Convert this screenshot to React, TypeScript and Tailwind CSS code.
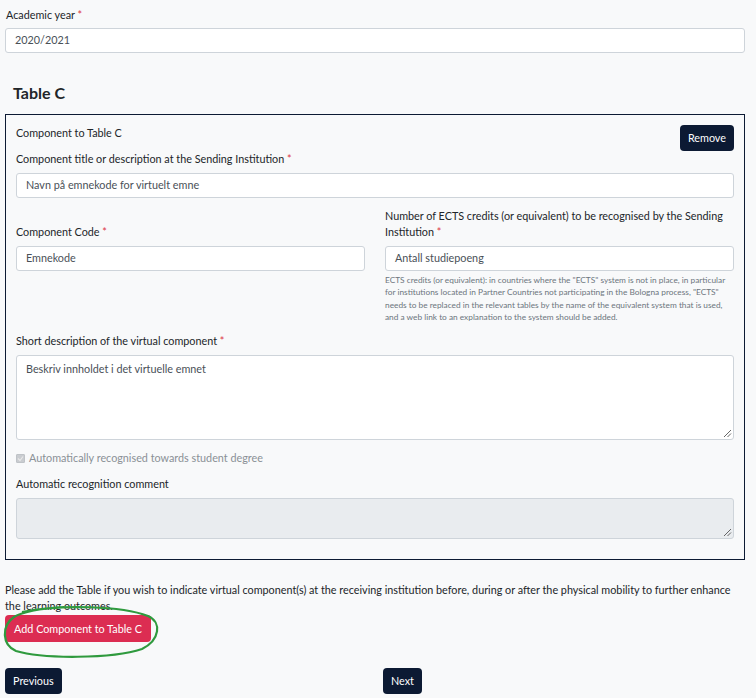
import React from "react";

function Req() {
  return <span className="text-[#dc3545]"> *</span>;
}

function Label({ children, req = false }: { children: React.ReactNode; req?: boolean }) {
  return (
    <div className="text-[10.8px] leading-[16px] text-[#212529] mb-[6px]">
      {children}
      {req && <Req />}
    </div>
  );
}

function Input({ value }: { value: string }) {
  return (
    <div className="h-[25px] flex items-center bg-white border border-[#ced4da] rounded-[3px] px-[9px] text-[10.8px] text-[#495057]">
      {value}
    </div>
  );
}

function Grip() {
  return (
    <svg className="absolute right-[1px] bottom-[1px]" width="9" height="9" viewBox="0 0 9 9">
      <path d="M8 1 L1 8 M8 4.5 L4.5 8" stroke="#555" strokeWidth="0.9" />
    </svg>
  );
}

export default function App() {
  return (
    <div className="min-h-[698px] bg-[#f8f9fa] pl-[5px] pr-[11px] pt-[6px] font-['Lato',sans-serif] text-[10.8px] text-[#212529]">
      <div className="leading-[18px] mb-[4px] ml-[1px]">
        Academic year<Req />
      </div>
      <Input value="2020/2021" />

      <h2 className="mt-[30px] mb-[11px] ml-[8px] text-[16px] leading-[20px] font-bold text-[#212529]">Table C</h2>

      <div className="border border-[#0c1a33] px-[10px] pt-[9px] pb-[20px]">
        <div className="flex justify-between items-start h-[26px]">
          <div className="leading-[18px]">Component to Table C</div>
          <button className="mt-[1px] h-[26px] px-[8px] rounded-[4px] bg-[#0c1a33] text-white text-[10.8px]">Remove</button>
        </div>

        <div className="mt-[1px]">
          <Label req>Component title or description at the Sending Institution</Label>
          <Input value="Navn på emnekode for virtuelt emne" />
        </div>

        <div className="grid grid-cols-2 gap-x-[20px] mt-[10px]">
          <div className="self-end">
            <Label req>Component Code</Label>
          </div>
          <div className="self-end">
            <Label req>Number of ECTS credits (or equivalent) to be recognised by the Sending Institution</Label>
          </div>
          <div>
            <Input value="Emnekode" />
          </div>
          <div>
            <Input value="Antall studiepoeng" />
            <p className="mt-[3px] text-[8.3px] leading-[12.3px] text-[#6c757d]">
              ECTS credits (or equivalent): in countries where the "ECTS" system is not in place, in particular for institutions located in Partner Countries not participating in the Bologna process, "ECTS" needs to be replaced in the relevant tables by the name of the equivalent system that is used, and a web link to an explanation to the system should be added.
            </p>
          </div>
        </div>

        <div className="mt-[10px]">
          <Label req>Short description of the virtual component</Label>
          <div className="relative h-[85px] bg-white border border-[#ced4da] rounded-[3px] px-[9px] pt-[5px] text-[#495057] leading-[16px]">
            Beskriv innholdet i det virtuelle emnet
            <Grip />
          </div>
        </div>

        <div className="mt-[10px] flex items-center h-[16px] text-[#8a9096]">
          <span className="w-[9px] h-[9px] bg-[#c9ccd0] border border-[#bfc3c7] rounded-[1px] mr-[4px] flex items-center justify-center">
            <svg width="7" height="7" viewBox="0 0 7 7"><path d="M1 3.5 L3 5.5 L6 1.5" stroke="#e8e8e8" strokeWidth="1.2" fill="none" /></svg>
          </span>
          Automatically recognised towards student degree
        </div>

        <div className="mt-[10px]">
          <Label>Automatic recognition comment</Label>
          <div className="relative h-[41px] bg-[#e9ecef] border border-[#ced4da] rounded-[3px]">
            <Grip />
          </div>
        </div>
      </div>

      <p className="mt-[22px] leading-[16px]">
        Please add the Table if you wish to indicate virtual component(s) at the receiving institution before, during or after the physical mobility to further enhance the learning outcomes.
      </p>

      <div className="relative w-[146px] mt-[1px]">
        <button className="h-[27px] w-[146px] rounded-[4px] bg-[#dc2d52] text-white text-[10.8px]">Add Component to Table C</button>
        <svg className="absolute left-[-3px] top-[-11px] overflow-visible" width="158" height="54" viewBox="0 0 158 54">
          <path
            d="M20 8 C 60 0, 120 2, 146 12 C 160 18, 158 36, 140 45 C 110 55, 40 55, 14 47 C 0 41, -1 22, 12 13 C 20 8, 40 4, 62 3"
            stroke="#2f9a3e"
            strokeWidth="2.2"
            fill="none"
          />
        </svg>
      </div>

      <div className="grid grid-cols-2 gap-x-4 mt-[26px] pb-[4px]">
        <div>
          <button className="h-[26px] px-[8px] rounded-[4px] bg-[#0c1a33] text-white text-[10.8px]">Previous</button>
        </div>
        <div>
          <button className="h-[26px] px-[8px] rounded-[4px] bg-[#0c1a33] text-white text-[10.8px]">Next</button>
        </div>
      </div>
    </div>
  );
}
